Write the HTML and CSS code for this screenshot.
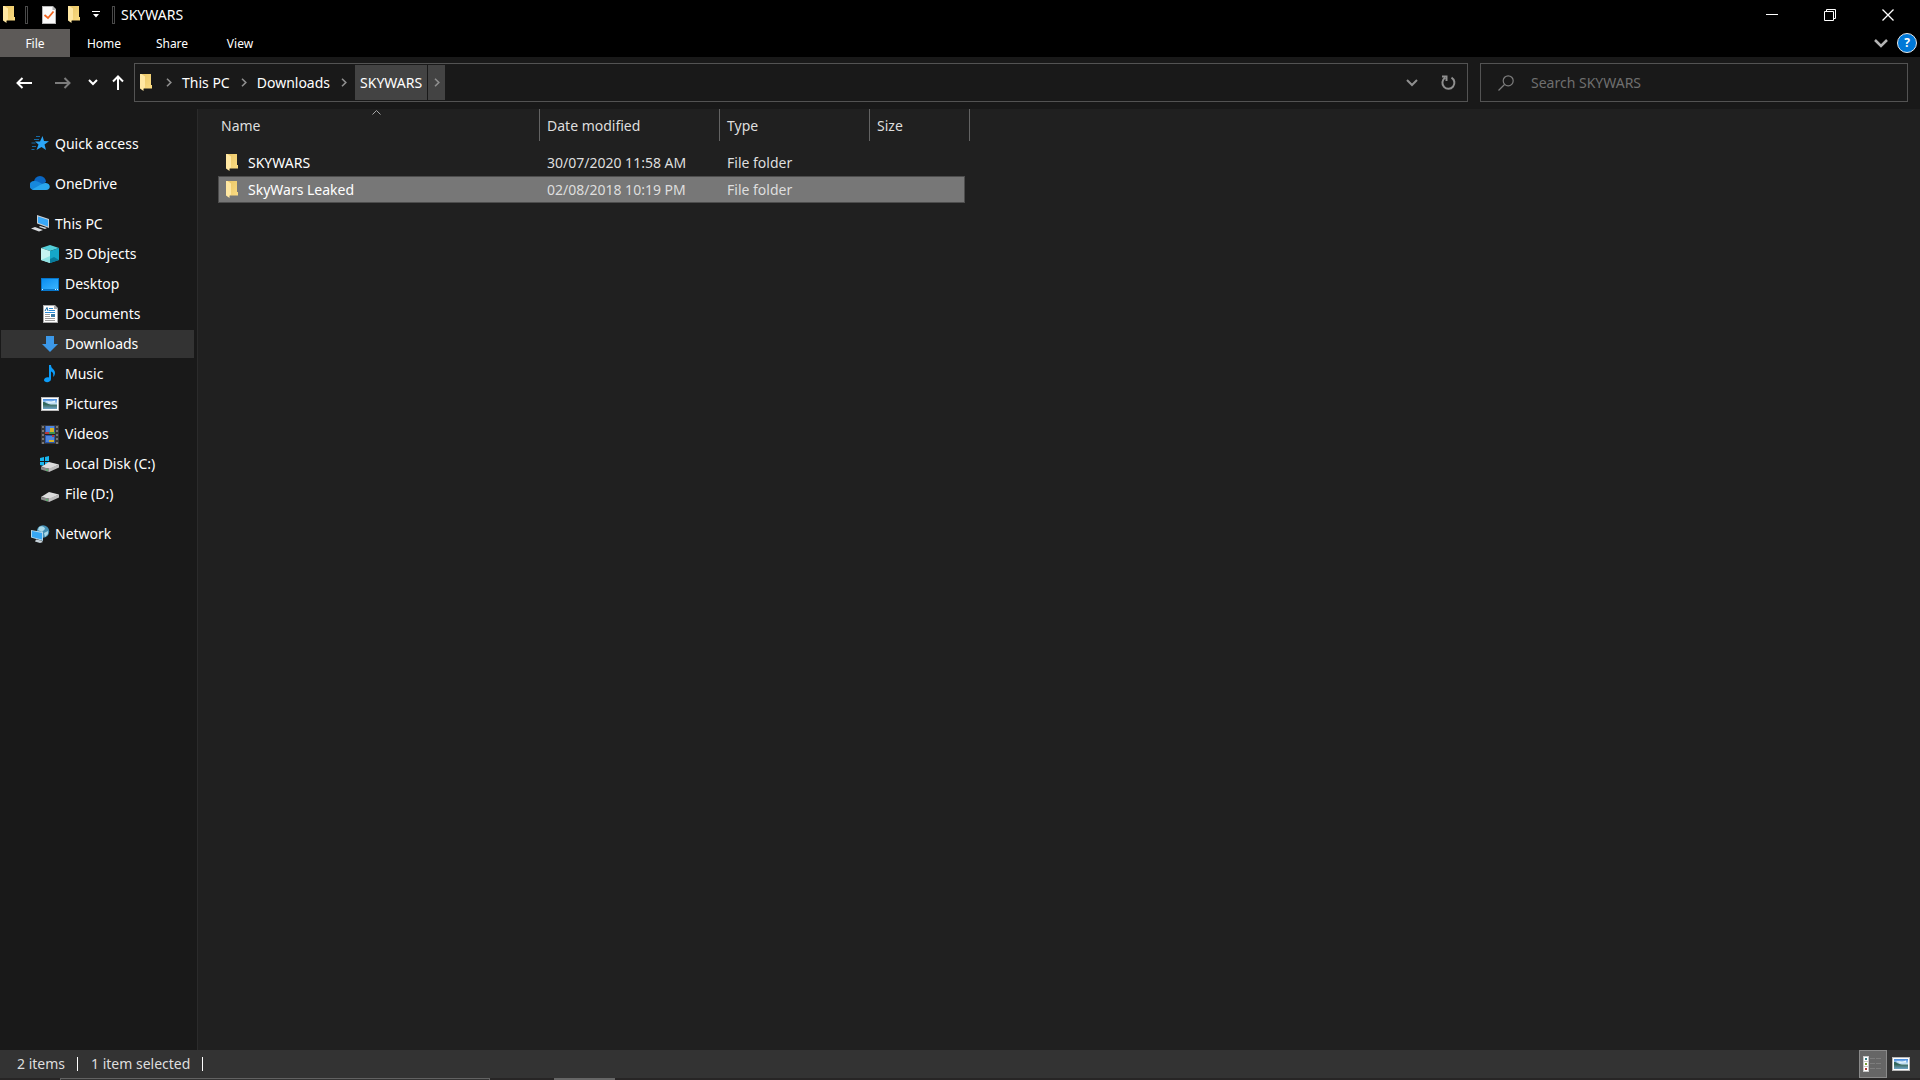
FILE: index.html
```html
<!DOCTYPE html>
<html lang="en">
<head>
<meta charset="utf-8">
<title>SKYWARS</title>
<link rel="stylesheet" href="styles.css">
</head>
<body>
<svg class="defs" aria-hidden="true">
  <defs>
    <linearGradient id="g-fold" x1="0" y1="0" x2="1" y2="1"><stop offset="0" stop-color="#e9c566"/><stop offset="1" stop-color="#fbdc83"/></linearGradient>
    <linearGradient id="g-blue" x1="0" y1="0" x2="1" y2="1"><stop offset="0" stop-color="#0a8df0"/><stop offset="1" stop-color="#3ab4ff"/></linearGradient>
    <linearGradient id="g-sky" x1="0" y1="0" x2="0" y2="1"><stop offset="0" stop-color="#3e86dd"/><stop offset=".5" stop-color="#cfe8f6"/><stop offset=".6" stop-color="#3f6f66"/><stop offset="1" stop-color="#6ea4c8"/></linearGradient>
    <symbol id="folder" viewBox="0 0 12 17"><path d="M1 0h10v11h1v3.500H1z" fill="url(#g-fold)"/><path d="M0 0h1.500L5 2.500V13.500L3.500 14.500V17L0 14.500z" fill="#ffe7a2"/></symbol>
    <symbol id="picture" viewBox="0 0 18 14"><path fill="#b9b9b9" d="M0 0h18v14H0z"/><path fill="#fff" d="M1 1h16v12H1z"/><path fill="url(#g-sky)" d="M2 2h14v10H2z"/><path fill="#32675c" d="M2 5c3 0 4 2 8 3H2z"/><path fill="#e6f5fc" d="M4 4.500c3-1 5 1 10-1v2l-6 .5z"/></symbol>
    <symbol id="drive" viewBox="0 0 18 10"><path fill="#dcdcdc" d="M0 5 8 0l10 2.500L9 7z"/><path fill="#8b8b8b" d="M0 5v2.500L8 10V6.500z"/><path fill="#bdbdbd" d="M8 6.500V10l10-4.500v-3z"/><path fill="#3ad058" d="M5 7.500h2v1H5z"/></symbol>
    <symbol id="crumb" viewBox="0 0 6 9"><path d="m1 .8 3.800 3.700L1 8.200" fill="none" stroke="#8f8f8f" stroke-width="1.600"/></symbol>
  </defs>
</svg>
<div class="window">
  <header class="titlebar">
    <svg class="folder" aria-hidden="true"><use href="#folder"/></svg>
    <span class="grip"></span>
    <button class="quick" aria-label="Properties"><svg width="14" height="18" viewBox="0 0 14 18"><path fill="#b5b5b5" d="M0 0h11l3 3v15H0z"/><path fill="#fafafa" d="M1 1h9.500v3H13v13H1z"/><path d="m2.500 9 3.500 3 5.500-6.500" fill="none" stroke="#f2641e" stroke-width="1.800"/></svg></button>
    <button class="quick" aria-label="New folder"><svg class="folder"><use href="#folder"/></svg></button>
    <button class="quick more" aria-label="Customise toolbar"><svg width="8" height="7" viewBox="0 0 8 7"><path fill="#fff" d="M0 0h8v1H0zM1 3h6L4 6.500z"/></svg></button>
    <span class="grip"></span>
    <h1>SKYWARS</h1>
    <div class="controls">
      <button aria-label="Minimise"><svg width="12" height="12"><path fill="#fff" d="M0 5h12v1H0z"/></svg></button>
      <button aria-label="Restore"><svg width="12" height="12" fill="none" stroke="#fff"><path d="M.5 2.500h9v9h-9zM2.500 2V.5h9v9H10"/></svg></button>
      <button aria-label="Close"><svg width="12" height="12" fill="none" stroke="#fff" stroke-width="1.300"><path d="m.5.5 11 11m0-11-11 11"/></svg></button>
    </div>
  </header>
  <div class="ribbon">
    <button class="tab file">File</button>
    <button class="tab">Home</button>
    <button class="tab">Share</button>
    <button class="tab">View</button>
    <button class="expand" aria-label="Expand ribbon"><svg width="14" height="9" viewBox="0 0 14 9"><path d="m1 1 6 6 6-6" fill="none" stroke="#b4b4b4" stroke-width="2.500"/></svg></button>
    <button class="help" aria-label="Help">?</button>
  </div>
  <div class="toolbar">
    <div class="nav-buttons">
      <button aria-label="Back"><svg width="16" height="12" fill="none" stroke="#fff" stroke-width="2"><path d="M1 6h15M6.500 1l-5 5 5 5"/></svg></button>
      <button aria-label="Forward"><svg width="16" height="12" fill="none" stroke="#7c7c7c" stroke-width="2"><path d="M0 6h15M9.500 1l5 5-5 5"/></svg></button>
      <button class="recent" aria-label="Recent locations"><svg width="10" height="7" fill="none" stroke="#fff" stroke-width="2"><path d="m1 1 4 4 4-4"/></svg></button>
      <button class="up" aria-label="Up"><svg width="12" height="15" fill="none" stroke="#fff" stroke-width="2"><path d="M6 15V1.500M1 6.500l5-5 5 5"/></svg></button>
    </div>
    <div class="address">
      <svg class="folder" aria-hidden="true"><use href="#folder"/></svg>
      <svg class="crumb first" aria-hidden="true"><use href="#crumb"/></svg>
      <button class="place">This PC</button>
      <svg class="crumb" aria-hidden="true"><use href="#crumb"/></svg>
      <button class="place">Downloads</button>
      <svg class="crumb" aria-hidden="true"><use href="#crumb"/></svg>
      <button class="place current">SKYWARS</button>
      <button class="place-next" aria-label="Subfolders"><svg class="crumb"><use href="#crumb"/></svg></button>
      <button class="history" aria-label="Previous locations"><svg width="12" height="8" fill="none" stroke="#8f8f8f" stroke-width="2"><path d="m1 1 5 5 5-5"/></svg></button>
      <button class="refresh" aria-label="Refresh"><svg width="15" height="16" fill="none" stroke="#8f8f8f" stroke-width="2"><path d="M10.500 2.600A6 6 0 1 1 4 2.800M1 1.500h4.500V6"/></svg></button>
    </div>
    <label class="search">
      <svg width="16" height="16" fill="none" stroke="#7d7d7d" stroke-width="1.200" aria-hidden="true"><circle cx="10.200" cy="5.800" r="5"/><path d="M6.500 9.500.5 15.500"/></svg>
      <input type="text" placeholder="Search SKYWARS" aria-label="Search SKYWARS">
    </label>
  </div>
  <div class="body">
    <nav class="tree" aria-label="Folders">
      <ul>
        <li><a href="#"><svg width="20" height="18"><path fill="#2ba5f7" d="m12.500 1 1.500 5 5 .3-4.500 3.200 1.500 5.500-4.500-3-5 3 2-5.500-3.500-3h5z"/><path d="M6 1.500h4M4 4.500h5M1.500 8h4M2 11.500h4M1.500 14.500h3" stroke="#1769a3"/></svg>Quick access</a></li>
        <li class="root"><a href="#"><svg width="20" height="18"><path fill="#0a66c2" d="M4 7A6 6 0 0 1 16 7l-9 6z"/><path fill="#1688dc" d="M4 15a4.500 4.500 0 0 1 0-9c3-.5 5 1 9 3.500z"/><path fill="#2aa7ee" d="M2 14.500 10 10c2-1 4-2.500 6-2 5 .5 5 7 0 7H4z"/></svg>OneDrive</a></li>
        <li class="root"><a href="#"><svg width="20" height="18"><path fill="#c9ced3" d="m7 0 12 4v9L7 8.500z"/><path fill="#39a8f8" d="m8 1.500 10 3.300v6.700L8 7.700z"/><path fill="#d9dcdf" d="M1 13.500 5 12l8 3-4 1.500zM10 11l7 2-2 1-6-2z"/></svg>This PC</a>
          <ul>
            <li><a href="#"><svg width="18" height="18"><path fill="#54cfd9" d="m9 0 9 3-9 3-9-3z"/><path fill="#c6f3f2" d="m0 3 9 3v12l-9-3z"/><path fill="#15a6c9" d="m9 6 9-3v12l-9 3z"/><path fill="#087c9d" d="m9 18 9-3-5-3-4 2z"/><path fill="#8fe3e4" d="m0 15 9-4v7z"/></svg>3D Objects</a></li>
            <li><a href="#"><svg width="18" height="18"><path fill="#0876c9" d="M0 3h18v13H0z"/><path fill="url(#g-blue)" d="M1 4h16v10H1z"/><path fill="#d7efff" d="M1 14h1v1H1zM14 14h1v1h-1zM16 14h1v1h-1z"/></svg>Desktop</a></li>
            <li><a href="#"><svg width="18" height="18"><path fill="#a9a9a9" d="M2 0h12l3 3v15H2z"/><path fill="#fff" d="M3 1h10v3h3v13H3z"/><path d="M8 3.500h4M8 5.500h6M4 7.500h10" stroke="#2a8ad4"/><path d="m4 6 2-3.500L7 6" stroke="#1769a3" fill="none"/><path d="M4 9.500h5M4 11.500h5M4 13.500h10M4 15.500h10" stroke="#9a9a9a"/><path fill="#397aa5" d="M10 9h4v3h-4z"/></svg>Documents</a></li>
            <li><a class="active" href="#" aria-current="true"><svg width="18" height="18"><path fill="#3c98e8" d="M5 1h8v8h4l-8 8-8-8h4z"/></svg>Downloads</a></li>
            <li><a href="#"><svg width="18" height="18"><path fill="#0c9cf8" d="M8 0h2c0 4 4 4 4 8 0 2-1 3-2 4 1-4-.5-5-2-5.500V14c0 4-7 4-7 1 0-2 3-3.500 5-2.500z"/></svg>Music</a></li>
            <li><a href="#"><svg width="18" height="14"><use href="#picture"/></svg>Pictures</a></li>
            <li><a href="#"><svg width="18" height="19"><path fill="#363636" d="M0 0h18v19H0z"/><path fill="#2955ad" d="M4 1h10v17H4z"/><path d="M2 1v18M16 1v18" stroke="#777" stroke-width="2" stroke-dasharray="2"/><path fill="#4d85dc" d="M5 1h8v6H5zM5 11h8v6H5z"/><path fill="#d6b22b" d="M9 3h4v4H9zM8 15h5v2H8z"/><path fill="#b7393b" d="M4 7h4v2H4zM11 10h2v2h-2z"/><path fill="#3f944e" d="M8 7h6v2H8z"/><path fill="#222" d="M4 9h10v1H4z"/></svg>Videos</a></li>
            <li><a href="#"><svg class="system" width="19" height="16"><path fill="#18b6ee" d="M0 2l4-1v4H0zM5 1l4-1v5H5zM0 6h4v4L0 9zM5 6h4v5l-4-1z"/><use href="#drive" x="1" y="6" width="18" height="10"/></svg>Local Disk (C:)</a></li>
            <li><a href="#"><svg width="18" height="16"><use href="#drive" y="6" width="18" height="10"/></svg>File (D:)</a></li>
          </ul>
        </li>
        <li class="root"><a href="#"><svg width="20" height="18"><circle cx="13" cy="6.500" r="6.200" fill="#438fb5"/><path fill="#a9d8e8" d="M9 2c3-2 6 0 6 2l-3 3-4-2zM14 8l4-2v3l-3 3z"/><path fill="#b4d8ec" d="m1 5 12 2v9L1 12.500z"/><path fill="#36a7f4" d="m2 6 10 2v6.500L2 12z"/><path fill="#c6d2d9" d="m6 14.500 5 1 2 1.500-3 1-5-1.500z"/></svg>Network</a></li>
      </ul>
    </nav>
    <main class="files">
      <table>
        <colgroup><col class="c-name"><col class="c-date"><col class="c-type"><col class="c-size"></colgroup>
        <thead><tr>
          <th aria-sort="ascending">Name<svg class="sort" width="9" height="5" fill="none" stroke="#a6a6a6"><path d="M.5 4.500l4-4 4 4"/></svg></th>
          <th>Date modified</th><th>Type</th><th>Size</th>
        </tr></thead>
        <tbody>
          <tr><td><span class="entry"><svg class="folder" aria-hidden="true"><use href="#folder"/></svg>SKYWARS</span></td><td>30/07/2020 11:58 AM</td><td>File folder</td><td></td></tr>
          <tr class="selected"><td><span class="entry"><svg class="folder" aria-hidden="true"><use href="#folder"/></svg>SkyWars Leaked</span></td><td>02/08/2018 10:19 PM</td><td>File folder</td><td></td></tr>
        </tbody>
      </table>
    </main>
  </div>
  <footer class="status">
    <span class="count">2 items</span>
    <span class="count">1 item selected</span>
    <div class="views">
      <button class="on" aria-label="Details view"><svg width="20" height="16"><path fill="#c8c8c8" d="M0 0h6v16H0z"/><path fill="#fff" d="M1 1h4v4H1zM1 6h4v4H1zM1 11h4v4H1z"/><path fill="#347e8a" d="M2 2h2v2H2z"/><path fill="#779b32" d="M2 7h2v2H2z"/><path fill="#b43832" d="M2 12h2v2H2z"/><path d="M7 2.500h5m1 0h5M7 7.500h5m1 0h5M7 12.500h5m1 0h5" stroke="#7d7d7d"/></svg></button>
      <button aria-label="Thumbnail view"><svg width="18" height="14"><use href="#picture"/></svg></button>
    </div>
  </footer>
  <div class="taskbar"><span class="task-search"></span><span class="task-app"></span></div>
</div>
</body>
</html>
```
FILE: styles.css
```css
* { box-sizing: border-box; }

body {
  margin: 0;
  background: #202020;
  color: #fff;
  font: 14px/20px "Noto Sans", "Open Sans", sans-serif;
}

svg { display: block; flex: none; }
.defs { position: absolute; width: 0; height: 0; }
ul { margin: 0; padding: 0; list-style: none; }
a { color: inherit; text-decoration: none; }

button {
  display: flex;
  align-items: center;
  justify-content: center;
  padding: 0;
  border: 0;
  background: none;
  color: inherit;
  font: inherit;
}

.folder { width: 12px; height: 17px; }

.window {
  display: flex;
  flex-direction: column;
  min-height: 100vh;
}

/* Title bar */
.titlebar {
  display: flex;
  align-items: center;
  height: 29px;
  padding-left: 3px;
  background: #000;
}
.grip {
  width: 3px;
  height: 18px;
  margin-left: 10px;
  border: 1px solid #4a4a4a;
}
.quick { width: 25px; height: 28px; }
.grip + .quick { margin-left: 8px; }
.quick.more { width: 20px; }
.more + .grip { margin-left: 6px; }
h1 {
  margin: 0 0 0 6px;
  font-size: 14px;
  font-weight: 400;
}
.controls {
  display: flex;
  align-self: stretch;
  margin-left: auto;
  padding-right: 3px;
}
.controls button { width: 58px; }

/* Ribbon */
.ribbon {
  display: flex;
  height: 28px;
  background: #000;
  font-size: 12px;
}
.tab { width: 68px; padding-top: 2px; }
.tab.file { width: 70px; background: #5d5a58; }
.expand { margin-left: auto; }
.help {
  align-self: center;
  width: 20px;
  height: 20px;
  margin: 0 3px 0 9px;
  border: 1px solid #e8e8e8;
  border-radius: 50%;
  background: #0078d7;
  font-weight: 700;
}

/* Navigation and address bar */
.toolbar {
  display: flex;
  align-items: center;
  height: 52px;
  padding: 0 12px 1px 0;
  background: #191919;
}
.nav-buttons {
  display: flex;
  flex: none;
  align-items: center;
  width: 134px;
  padding-left: 4px;
}
.nav-buttons button { width: 39px; height: 36px; }
.nav-buttons .recent { width: 21px; }
.nav-buttons .up { width: 30px; }
.address {
  display: flex;
  flex: 1327;
  align-items: center;
  height: 39px;
  padding-left: 5px;
  border: 1px solid #535353;
}
.crumb { width: 6px; height: 9px; margin: 0 3px; }
.crumb.first { margin-left: 14px; }
.place { height: 35px; padding: 0 8px 0 7px; }
.place.current { margin-left: 5px; padding: 0 5px; background: #434343; }
.place-next { width: 17px; height: 35px; margin-left: 1px; background: #434343; }
.history { margin-left: auto; }
.refresh { width: 37px; height: 37px; margin-left: 12px; }
.search {
  display: flex;
  flex: 409;
  align-items: center;
  height: 39px;
  margin-left: 12px;
  padding-left: 17px;
  border: 1px solid #535353;
}
.search input {
  flex: 1;
  min-width: 0;
  margin-left: 17px;
  padding: 0;
  border: 0;
  outline: 0;
  background: none;
  color: #fff;
  font: inherit;
}
.search input::placeholder { color: #6f6f6f; opacity: 1; }

/* Folder tree and file list */
.body { display: flex; flex: 1; }
.tree {
  flex: none;
  width: 198px;
  padding-top: 21px;
  border-right: 1px solid #2b2b2b;
  background: #191919;
}
.tree a {
  display: flex;
  align-items: center;
  gap: 5px;
  height: 28px;
  margin: 0 3px 2px 1px;
  padding-left: 29px;
}
.tree ul ul a { gap: 6px; padding-left: 40px; }
.tree .root { padding-top: 10px; }
.tree a.active { background: #333; }
.tree .system { margin-left: -1px; }

.files { flex: 1; padding-left: 14px; }
table {
  width: 758px;
  border-spacing: 0;
  table-layout: fixed;
}
.c-name { width: 328px; }
.c-date { width: 180px; }
.c-type { width: 150px; }
.c-size { width: 100px; }
th {
  position: relative;
  height: 32px;
  padding: 2px 0 0 7px;
  border-right: 1px solid #636363;
  color: #dedede;
  font-weight: 400;
  text-align: left;
}
thead::after { content: ""; display: block; height: 8px; }
th:first-child { padding-left: 9px; }
.sort { position: absolute; top: 1px; left: 160px; }
td {
  height: 27px;
  padding: 0 0 0 7px;
  color: #dedede;
}
td:first-child {
  padding-left: 8px;
  border-left: 6px solid transparent;
  background-clip: padding-box;
  color: #fff;
}
td:last-child {
  border-right: 5px solid transparent;
  background-clip: padding-box;
}
.selected td {
  background-color: #777;
  box-shadow: inset 0 1px #4d4d4d, inset 0 -1px #4d4d4d;
}
.selected td:first-child { box-shadow: inset 0 1px #4d4d4d, inset 0 -1px #4d4d4d, inset 1px 0 #4d4d4d; }
.selected td:last-child { box-shadow: inset 0 1px #4d4d4d, inset 0 -1px #4d4d4d, inset -1px 0 #4d4d4d; }
.entry { display: flex; align-items: center; gap: 10px; }

/* Status bar */
.status {
  display: flex;
  align-items: center;
  height: 28px;
  padding-left: 17px;
  background: #333;
  color: #dedede;
}
.count {
  display: flex;
  align-items: center;
  margin-right: 13px;
}
.count::after {
  content: "";
  width: 1px;
  height: 14px;
  margin-left: 12px;
  background: #fff;
}
.views { display: flex; margin-left: auto; padding-right: 5px; }
.views button { width: 28px; height: 28px; }
.views .on { border: 1px solid #8a8a8a; background: #666; }
.taskbar { display: flex; height: 2px; padding-left: 60px; background: #272525; }
.task-search {
  width: 430px;
  border: 1px solid #626262;
  border-bottom: 0;
  background: #333;
}
.task-app { width: 61px; margin-left: 64px; background: #666; }
```
